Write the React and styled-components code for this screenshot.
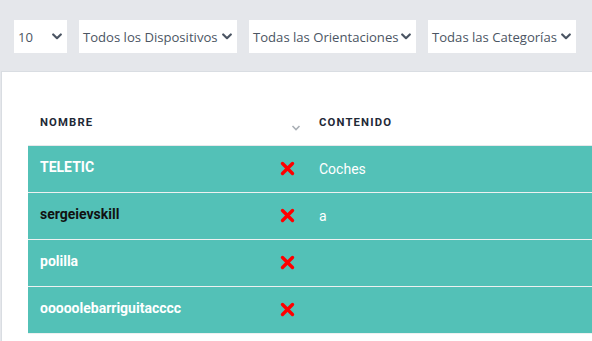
import React from "react";
import styled, { createGlobalStyle } from "styled-components";

const Global = createGlobalStyle`
  html, body { margin: 0; padding: 0; overflow: hidden; }
  body { background: #e5e7eb; font-family: "Open Sans", "Noto Sans", sans-serif; width: 592px; height: 341px; }
`;

const Page = styled.div`
  display: flex;
  flex-direction: column;
`;

const Filters = styled.div`
  display: flex;
  gap: 12px;
  padding: 20px 0 18px 14px;
`;

const SelectBox = styled.div`
  box-sizing: border-box;
  width: ${(p) => p.$w}px;
  height: 33px;
  background: #fff;
  display: flex;
  align-items: center;
  justify-content: space-between;
  padding: 0 5px 0 4px;
  color: #4b5563;
  font-family: "Open Sans", sans-serif;
  font-size: 13.1px;
  white-space: nowrap;
`;

const Chevron = styled.svg`
  width: 10px;
  height: 7px;
  flex: none;
`;

const Card = styled.div`
  margin-left: 1px;
  width: 760px;
  background: #fff;
  border-top: 1px solid #d9dde2;
  border-left: 1px solid #d9dde2;
  padding: 28px 0 0 26px;
  min-height: 300px;
`;

const Table = styled.table`
  border-collapse: collapse;
  width: 720px;
  font-family: Roboto, "Liberation Sans", sans-serif;
`;

const Th = styled.th`
  height: 45px;
  text-align: left;
  font-size: 11.3px;
  font-weight: 700;
  letter-spacing: 1.15px;
  color: #1f2937;
  padding: 0 12px 0 ${(p) => p.$pl}px;
  width: ${(p) => (p.$w ? `${p.$w}px` : "auto")};
  box-sizing: border-box;
  border-bottom: 1px solid #e6e8eb;
  position: relative;
`;

const SortIcon = styled.svg`
  position: absolute;
  right: 5px;
  top: 25px;
  width: 10px;
  height: 6px;
`;

const Row = styled.tr`
  background: #53c1b7;
  border-bottom: 1px solid #eef1f1;
`;

const NameCell = styled.td`
  height: 47px;
  padding: 0 11px 0 12px;
  box-sizing: border-box;
`;

const NameInner = styled.div`
  display: flex;
  align-items: center;
  justify-content: space-between;
`;

const Name = styled.span`
  font-size: 14px;
  font-weight: 700;
  color: ${(p) => (p.$dark ? "#111" : "#fff")};
  padding-bottom: 4px;
`;

const ContentCell = styled.td`
  padding: 0 13px;
  font-size: 14px;
  color: #fff;
`;

const Cross = styled.svg`
  width: 15px;
  height: 15px;
  flex: none;
`;

const ChevronIcon = () => (
  <Chevron viewBox="0 0 10 7">
    <path d="M1.2 1.5 L5 5.2 L8.8 1.5" fill="none" stroke="#4b5563" strokeWidth="2.2" strokeLinecap="round" strokeLinejoin="round" />
  </Chevron>
);

const CrossIcon = () => (
  <Cross viewBox="0 0 15 15">
    <path d="M2.5 2.5 L12.5 12.5 M12.5 2.5 L2.5 12.5" stroke="#ff0000" strokeWidth="3.4" strokeLinecap="round" />
  </Cross>
);

const filters = [
  { label: "10", w: 53 },
  { label: "Todos los Dispositivos", w: 158 },
  { label: "Todas las Orientaciones", w: 167 },
  { label: "Todas las Categorías", w: 148 },
];

const rows = [
  { name: "TELETIC", content: "Coches" },
  { name: "sergeievskill", content: "a", dark: true },
  { name: "polilla", content: "" },
  { name: "ooooolebarriguitacccc", content: "" },
];

export default function App() {
  return (
    <Page>
      <Global />
      <Filters>
        {filters.map((f) => (
          <SelectBox key={f.label} $w={f.w}>
            <span>{f.label}</span>
            <ChevronIcon />
          </SelectBox>
        ))}
      </Filters>
      <Card>
        <Table>
          <thead>
            <tr>
              <Th $w={278} $pl={12}>
                NOMBRE
                <SortIcon viewBox="0 0 10 6">
                  <path d="M1.5 1 L5 4.5 L8.5 1" fill="none" stroke="#aab0b6" strokeWidth="1.6" />
                </SortIcon>
              </Th>
              <Th $pl={13}>CONTENIDO</Th>
            </tr>
          </thead>
          <tbody>
            {rows.map((r) => (
              <Row key={r.name}>
                <NameCell>
                  <NameInner>
                    <Name $dark={r.dark}>{r.name}</Name>
                    <CrossIcon />
                  </NameInner>
                </NameCell>
                <ContentCell>{r.content}</ContentCell>
              </Row>
            ))}
          </tbody>
        </Table>
      </Card>
    </Page>
  );
}
